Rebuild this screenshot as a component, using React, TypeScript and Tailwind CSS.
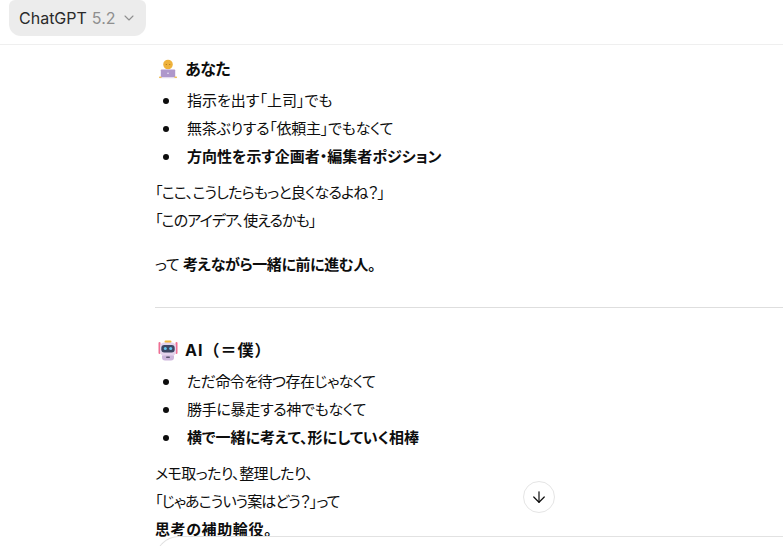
import { ChevronDown, ArrowDown } from 'lucide-react';

const jp = "font-['Inter','Noto_Sans_CJK_JP',sans-serif]";

function PersonEmoji() {
  return (
    <svg width="20" height="20" viewBox="0 0 20 20" className="shrink-0">
      <circle cx="10" cy="5.5" r="4.8" fill="#eeb23c" />
      <circle cx="8.3" cy="5.5" r="0.6" fill="#a86b1e" />
      <circle cx="11.7" cy="5.5" r="0.6" fill="#a86b1e" />
      <rect x="2.8" y="10.5" width="14.4" height="8" rx="0.8" fill="#ae97cb" />
      <rect x="9.2" y="13.6" width="1.6" height="1.4" fill="#e0d6ee" />
      <rect x="1" y="18" width="18" height="1.2" rx="0.6" fill="#e3d9ee" />
      <rect x="1" y="17.6" width="2.6" height="1.5" rx="0.7" fill="#f0c05a" />
      <rect x="16.4" y="17.6" width="2.6" height="1.5" rx="0.7" fill="#f0c05a" />
    </svg>
  );
}

function RobotEmoji() {
  return (
    <svg width="20" height="21" viewBox="0 0 20 21" className="shrink-0">
      <rect x="0.5" y="2" width="2" height="12" rx="1" fill="#ee6f93" />
      <rect x="17.5" y="2" width="2" height="12" rx="1" fill="#ee6f93" />
      <rect x="6.5" y="0.5" width="7" height="2.5" rx="1.2" fill="#f2b93f" />
      <rect x="2" y="2.5" width="16" height="13.5" rx="4.5" fill="#e4d3ec" />
      <rect x="3.3" y="5" width="13.4" height="7.5" rx="3" fill="#3d4663" />
      <circle cx="7.3" cy="8.5" r="1.5" fill="#64c6ee" />
      <circle cx="12.7" cy="8.5" r="1.5" fill="#64c6ee" />
      <path d="M4 15.5h12v2q0 3-3 3H7q-3 0-3-3z" fill="#cdb6dc" />
      <rect x="8" y="16.5" width="4" height="1.6" rx="0.8" fill="#5b5470" />
    </svg>
  );
}

function BulletList({ items }: { items: { text: string; className?: string }[] }) {
  return (
    <ul className="flex flex-col">
      {items.map((item) => (
        <li key={item.text} className="flex h-7 items-center">
          <span className="ml-[8px] mr-[18px] size-[6px] shrink-0 rounded-full bg-[#0d0d0d]" />
          <span className={item.className}>{item.text}</span>
        </li>
      ))}
    </ul>
  );
}

export default function App() {
  return (
    <div className={`relative h-[546px] w-[783px] overflow-hidden bg-white text-[15px] text-[#0d0d0d] [font-feature-settings:'palt'] ${jp}`}>
      <header className="h-[45px] border-b border-[#efefef]">
        <button className="ml-[9px] flex h-9 w-[137px] items-center gap-[5px] rounded-b-xl rounded-t-md bg-[#ececec] pl-[10px] text-[16px] [font-feature-settings:normal]">
          <span className="text-[#2a2a2a]">ChatGPT</span>
          <span className="text-[#8f8f8f]">5.2</span>
          <ChevronDown size={16} strokeWidth={1.6} className="text-[#8f8f8f]" />
        </button>
      </header>

      <main className="ml-[155px]">
        <h3 className="mt-[11px] flex h-[26px] items-center gap-[7px] pl-[3px] text-[16px] font-bold tracking-[-0.5px]">
          <PersonEmoji />
          あなた
        </h3>
        <div className="mt-[5px]">
          <BulletList
            items={[
              { text: '指示を出す「上司」でも' },
              { text: '無茶ぶりする「依頼主」でもなくて', className: 'tracking-[-0.25px]' },
              { text: '方向性を示す企画者・編集者ポジション', className: 'font-bold' },
            ]}
          />
        </div>
        <p className="mt-[8px] leading-7">
          <span className="tracking-[-0.8px]">「ここ、こうしたらもっと良くなるよね？」</span>
          <br />
          <span className="tracking-[-0.9px]">「このアイデア、使えるかも」</span>
        </p>
        <p className="mt-[16px] leading-7 tracking-[-0.4px]">
          って <strong>考えながら一緒に前に進む人。</strong>
        </p>
        <hr className="mt-[28px] border-[#dedede]" />
        <h3 className="mt-[29px] flex h-[26px] items-center gap-[7px] pl-[3px] text-[16px] font-bold tracking-[1px] [font-feature-settings:normal]">
          <RobotEmoji />
          AI（＝僕）
        </h3>
        <div className="mt-[5px]">
          <BulletList
            items={[
              { text: 'ただ命令を待つ存在じゃなくて', className: 'tracking-[-0.55px]' },
              { text: '勝手に暴走する神でもなくて', className: 'tracking-[-0.3px]' },
              { text: '横で一緒に考えて、形にしていく相棒', className: 'font-bold' },
            ]}
          />
        </div>
        <p className="mt-[8px] leading-7">
          <span className="tracking-[-0.55px]">メモ取ったり、整理したり、</span>
          <br />
          <span className="tracking-[-0.9px]">「じゃあこういう案はどう？」って</span>
          <br />
          <strong className="tracking-[0.6px]">思考の補助輪役。</strong>
        </p>
      </main>

      <button className="absolute left-[523px] top-[481px] flex size-8 items-center justify-center rounded-full border border-[#e5e5e5] bg-white">
        <ArrowDown size={18} strokeWidth={1.6} />
      </button>
      <div className="absolute left-[155px] right-0 top-[536px] h-10 rounded-tl-3xl border-l border-t border-[#e2e2e2] bg-white" />
    </div>
  );
}
